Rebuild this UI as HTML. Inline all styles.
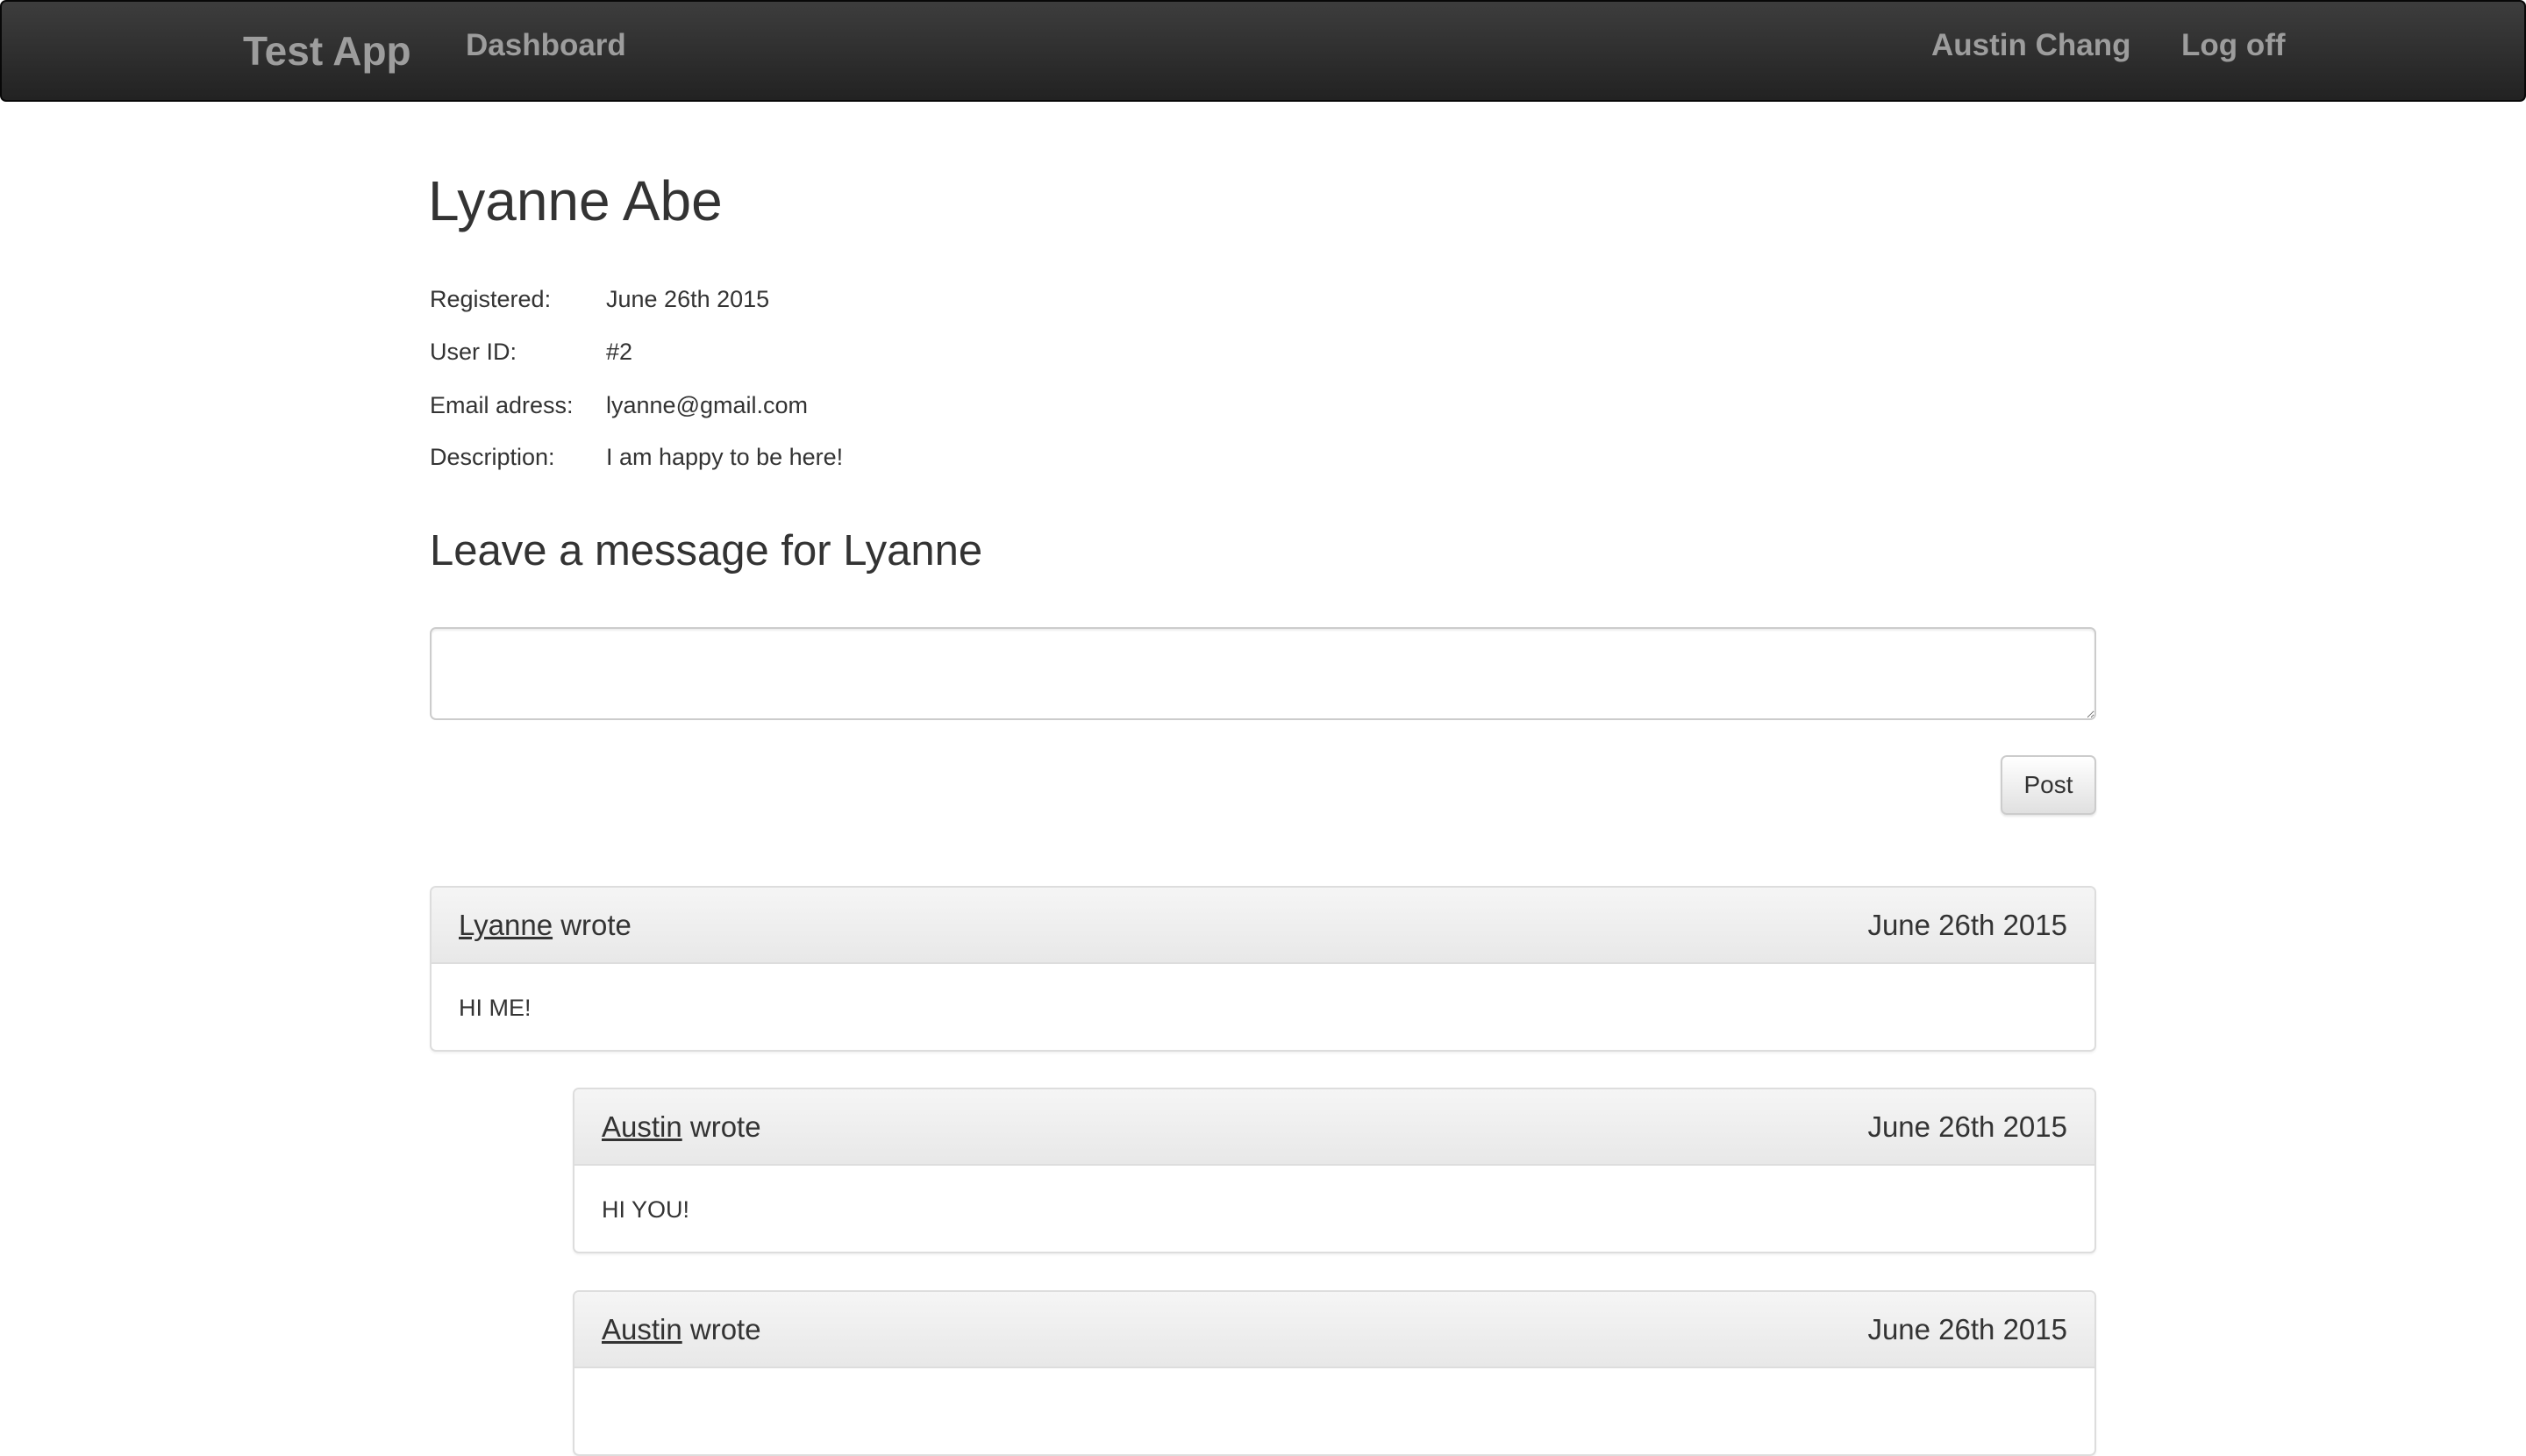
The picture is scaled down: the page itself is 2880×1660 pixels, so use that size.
<!DOCTYPE html>
<html><head><meta charset="utf-8"><style>
*{box-sizing:border-box;margin:0;padding:0}
body{width:2880px;height:1588px;overflow:hidden;background:#fff;font-family:"Liberation Sans",Arial,sans-serif;color:#333;position:relative}
.nav{position:absolute;left:0;top:0;width:2880px;height:116px;background:linear-gradient(#3d3d3d,#222);border:2px solid #080808;border-radius:7px}
.nav span{position:absolute;color:#9d9d9d;white-space:nowrap;font-weight:bold}
.abs{position:absolute;white-space:nowrap}
.row{position:absolute;left:490px;font-size:27px;white-space:nowrap;width:1000px}
.row b{font-weight:normal;position:absolute;left:201px;top:0;white-space:nowrap}
textarea{position:absolute;left:490px;top:715px;width:1900px;height:106px;border:2px solid #ccc;border-radius:7px;box-shadow:inset 0 2px 2px rgba(0,0,0,.075);resize:both}
.btn{position:absolute;left:2281px;top:861px;width:109px;height:68px;border:2px solid #ccc;border-radius:7px;background:linear-gradient(#fff,#e0e0e0);font-size:28px;text-align:center;line-height:64px;box-shadow:0 2px 2px rgba(0,0,0,.1)}
.panel{position:absolute;border:2px solid #ddd;border-radius:7px;background:#fff;overflow:hidden;box-shadow:0 2px 2px rgba(0,0,0,.05)}
.ph{height:87px;background:linear-gradient(#f5f5f5,#e8e8e8);border-bottom:2px solid #ddd;font-size:33px;padding:0 31px;line-height:85px;position:relative}
.ph u{text-decoration:underline}
.ph .d{position:absolute;right:31px;top:0}
.pb{font-size:27px;padding:0 31px;line-height:100px}
</style></head><body>
<div class="nav">
<span style="left:275px;top:29px;font-size:46px">Test App</span>
<span style="left:529px;top:30px;font-size:35px">Dashboard</span>
<span style="left:2200px;top:30px;font-size:35px">Austin Chang</span>
<span style="left:2485px;top:30px;font-size:35px">Log off</span>
</div>
<div class="abs" style="left:488px;top:192px;font-size:64px">Lyanne Abe</div>
<div class="row" style="top:326px">Registered:<b>June 26th 2015</b></div>
<div class="row" style="top:386px">User ID:<b>#2</b></div>
<div class="row" style="top:447px">Email adress:<b>lyanne@gmail.com</b></div>
<div class="row" style="top:506px">Description:<b>I am happy to be here!</b></div>
<div class="abs" style="left:490px;top:600px;font-size:49px">Leave a message for Lyanne</div>
<textarea></textarea>
<div class="btn">Post</div>
<div class="panel" style="left:490px;top:1010px;width:1900px;height:189px">
<div class="ph"><u>Lyanne</u> wrote<span class="d">June 26th 2015</span></div>
<div class="pb">HI ME!</div></div>
<div class="panel" style="left:653px;top:1240px;width:1737px;height:189px">
<div class="ph"><u>Austin</u> wrote<span class="d">June 26th 2015</span></div>
<div class="pb">HI YOU!</div></div>
<div class="panel" style="left:653px;top:1471px;width:1737px;height:189px">
<div class="ph"><u>Austin</u> wrote<span class="d">June 26th 2015</span></div>
<div class="pb"></div></div>
</body></html>
